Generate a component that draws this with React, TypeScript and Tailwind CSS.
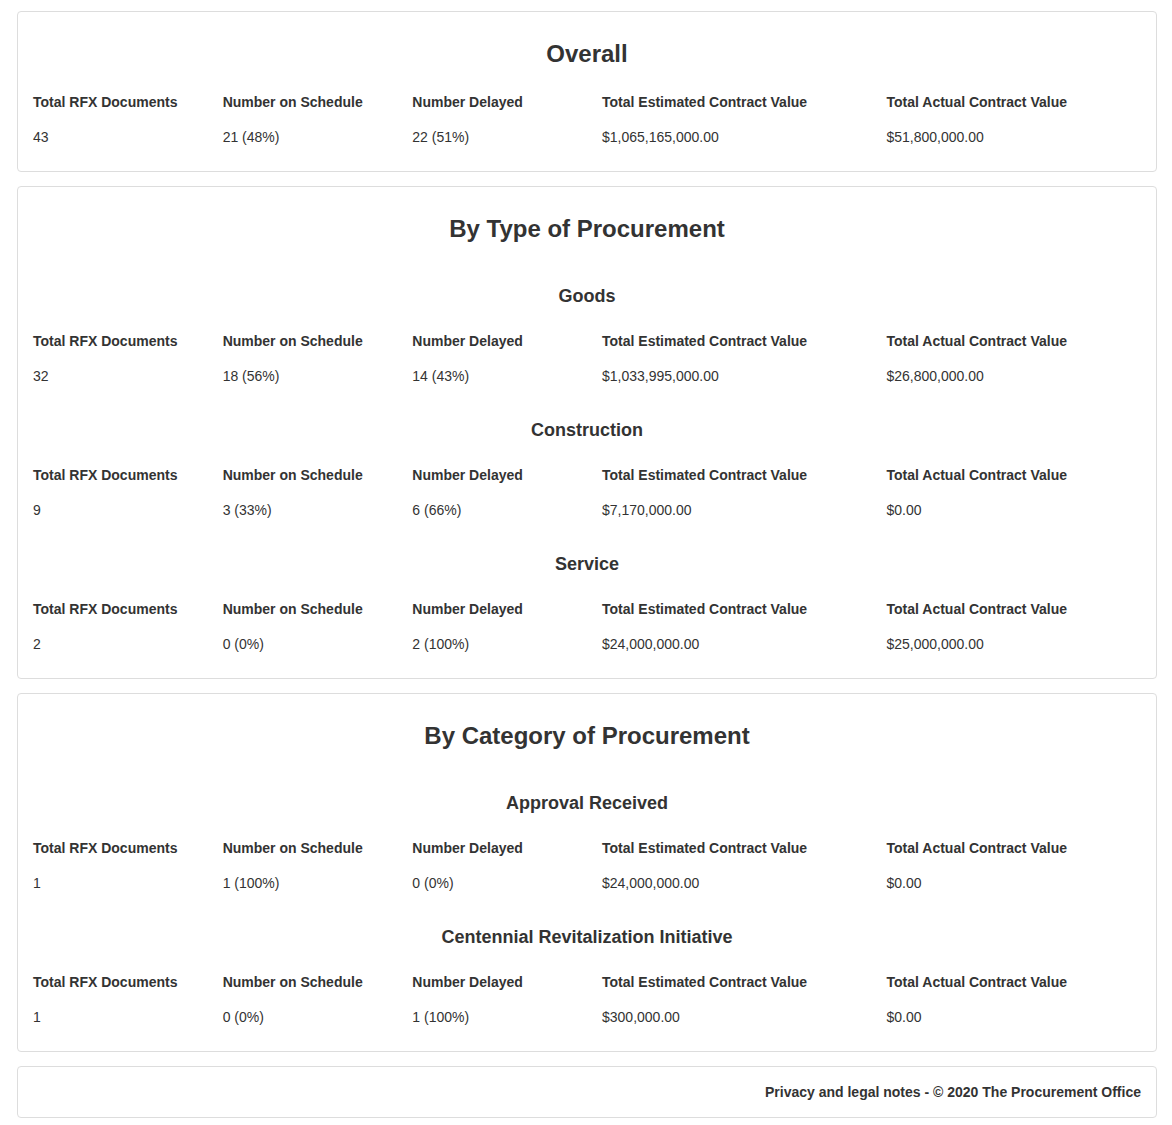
import React from "react";

type Row = { total: string; onSched: string; delayed: string; est: string; actual: string };

const labels = [
  "Total RFX Documents",
  "Number on Schedule",
  "Number Delayed",
  "Total Estimated Contract Value",
  "Total Actual Contract Value",
];

function Stats({ r }: { r: Row }) {
  const vals = [r.total, r.onSched, r.delayed, r.est, r.actual];
  return (
    <div>
      <div className="grid grid-cols-[2fr_2fr_2fr_3fr_3fr]">
        {labels.map((l) => (
          <div key={l} className="px-[15px] font-bold text-[14px] leading-[20px]">
            {l}
          </div>
        ))}
      </div>
      <div className="grid grid-cols-[2fr_2fr_2fr_3fr_3fr] mt-[15px]">
        {vals.map((v, i) => (
          <div key={i} className="px-[15px] text-[14px] leading-[20px]">
            {v}
          </div>
        ))}
      </div>
    </div>
  );
}

function Card({ children, className = "" }: { children: React.ReactNode; className?: string }) {
  return (
    <div className={"border border-[#dddddd] rounded-[4px] bg-white " + className}>{children}</div>
  );
}

function Title({ children }: { children: React.ReactNode }) {
  return (
    <div className="text-center font-bold text-[24px] leading-[26px] pt-[29px]">{children}</div>
  );
}

function Sub({ children, mt }: { children: React.ReactNode; mt: string }) {
  return (
    <div className={"text-center font-bold text-[18px] leading-[20px] mb-[25px] " + mt}>{children}</div>
  );
}

export default function App() {
  return (
    <div
      className="bg-white text-[#333333] min-h-[1125px] pt-[11px] pl-[17px]"
      style={{ fontFamily: '"Liberation Sans", Arial, Helvetica, sans-serif' }}
    >
      <div className="w-[1140px] flex flex-col gap-[14px]">
        <Card className="pb-[24px]">
          <Title>Overall</Title>
          <div className="mt-[25px]">
            <Stats r={{ total: "43", onSched: "21 (48%)", delayed: "22 (51%)", est: "$1,065,165,000.00", actual: "$51,800,000.00" }} />
          </div>
        </Card>

        <Card className="pb-[24px]">
          <Title>By Type of Procurement</Title>
          <Sub mt="mt-[44px]">Goods</Sub>
          <Stats r={{ total: "32", onSched: "18 (56%)", delayed: "14 (43%)", est: "$1,033,995,000.00", actual: "$26,800,000.00" }} />
          <Sub mt="mt-[34px]">Construction</Sub>
          <Stats r={{ total: "9", onSched: "3 (33%)", delayed: "6 (66%)", est: "$7,170,000.00", actual: "$0.00" }} />
          <Sub mt="mt-[34px]">Service</Sub>
          <Stats r={{ total: "2", onSched: "0 (0%)", delayed: "2 (100%)", est: "$24,000,000.00", actual: "$25,000,000.00" }} />
        </Card>

        <Card className="pb-[24px]">
          <Title>By Category of Procurement</Title>
          <Sub mt="mt-[44px]">Approval Received</Sub>
          <Stats r={{ total: "1", onSched: "1 (100%)", delayed: "0 (0%)", est: "$24,000,000.00", actual: "$0.00" }} />
          <Sub mt="mt-[34px]">Centennial Revitalization Initiative</Sub>
          <Stats r={{ total: "1", onSched: "0 (0%)", delayed: "1 (100%)", est: "$300,000.00", actual: "$0.00" }} />
        </Card>

        <Card className="h-[52px] flex items-center justify-end px-[15px]">
          <div className="font-bold text-[14px] leading-[20px]">
            Privacy and legal notes - © 2020 The Procurement Office
          </div>
        </Card>
      </div>
    </div>
  );
}
